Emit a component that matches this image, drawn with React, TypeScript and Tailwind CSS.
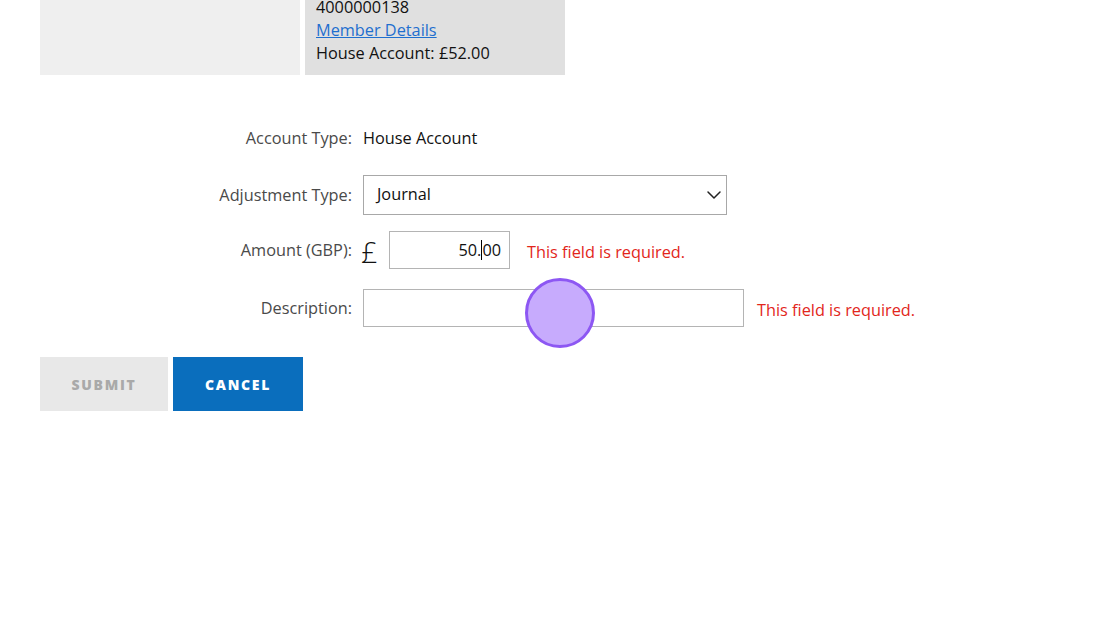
import { ChevronDown } from "lucide-react";

const font = { fontFamily: '"Open Sans", "Liberation Sans", sans-serif' };

function Row({ label, children, className }: { label: string; children: React.ReactNode; className?: string }) {
  return (
    <div className={"flex items-center " + (className ?? "")}>
      <div className="w-[312px] shrink-0 text-right text-[16.3px] text-[#4a4a4a]">{label}</div>
      <div className="flex items-center pl-[11px]">{children}</div>
    </div>
  );
}

export default function App() {
  return (
    <div className="relative w-[1120px] h-[625px] overflow-hidden bg-white" style={font}>
      {/* Member summary panels */}
      <div className="flex gap-[5px] pl-[40px]">
        <div className="w-[260px] h-[75px] bg-[#efefef]" />
        <div className="w-[260px] h-[75px] bg-[#e0e0e0] flex flex-col justify-end px-[11px] pb-[10px] overflow-hidden text-[16.3px] leading-[23px] text-[#111]">
          <div>4000000138</div>
          <a href="#" className="text-[#1f6fcf] underline">Member Details</a>
          <div>House Account: £52.00</div>
        </div>
      </div>

      {/* Adjustment form */}
      <div className="flex flex-col pl-[40px]">
        <Row label="Account Type:" className="mt-[43px] h-[40px]">
          <span className="text-[16.3px] text-[#111]">House Account</span>
        </Row>

        <Row label="Adjustment Type:" className="mt-[17px] h-[40px]">
          <div className="w-[364px] h-[40px] border border-[#a8a8a8] flex items-center justify-between pl-[13px] text-[16.3px] text-[#111]">
            <span className="-mt-[2px]">Journal</span>
            <ChevronDown size={24} strokeWidth={1.5} className="text-[#222]" />
          </div>
        </Row>

        <Row label="Amount (GBP):" className="mt-[16px] h-[38px]">
          <span className="text-[29px] font-light leading-none text-[#111] w-[16px] -ml-[2px] pt-[3px]">£</span>
          <div className="ml-[12px] w-[121px] h-[38px] border border-[#b4b4b4] flex items-center justify-end pr-[8px] text-[16.3px] text-[#111]">
            <span>50.</span>
            <span className="inline-block w-px h-[20px] bg-black" />
            <span>00</span>
          </div>
          <span className="ml-[17px] pt-[5px] text-[16.3px] text-[#e2261b]">This field is required.</span>
        </Row>

        <Row label="Description:" className="mt-[20px] h-[38px]">
          <div className="w-[381px] h-[38px] border border-[#b4b4b4]" />
          <span className="ml-[13px] pt-[5px] text-[16.3px] text-[#e2261b]">This field is required.</span>
        </Row>

        <div className="mt-[30px] flex gap-[5px]">
          <button className="w-[128px] h-[54px] bg-[#e8e8e8] text-[#a9a9a9] text-[14px] font-extrabold tracking-[0.12em]">SUBMIT</button>
          <button className="w-[130px] h-[54px] bg-[#0a6ebd] text-white text-[14px] font-extrabold tracking-[0.12em]">CANCEL</button>
        </div>
      </div>

      {/* Click indicator */}
      <div className="absolute left-[525px] top-[278px] w-[70px] h-[70px] rounded-full bg-[#c7abfd] border-[3px] border-[#8d57f3]" />
    </div>
  );
}
